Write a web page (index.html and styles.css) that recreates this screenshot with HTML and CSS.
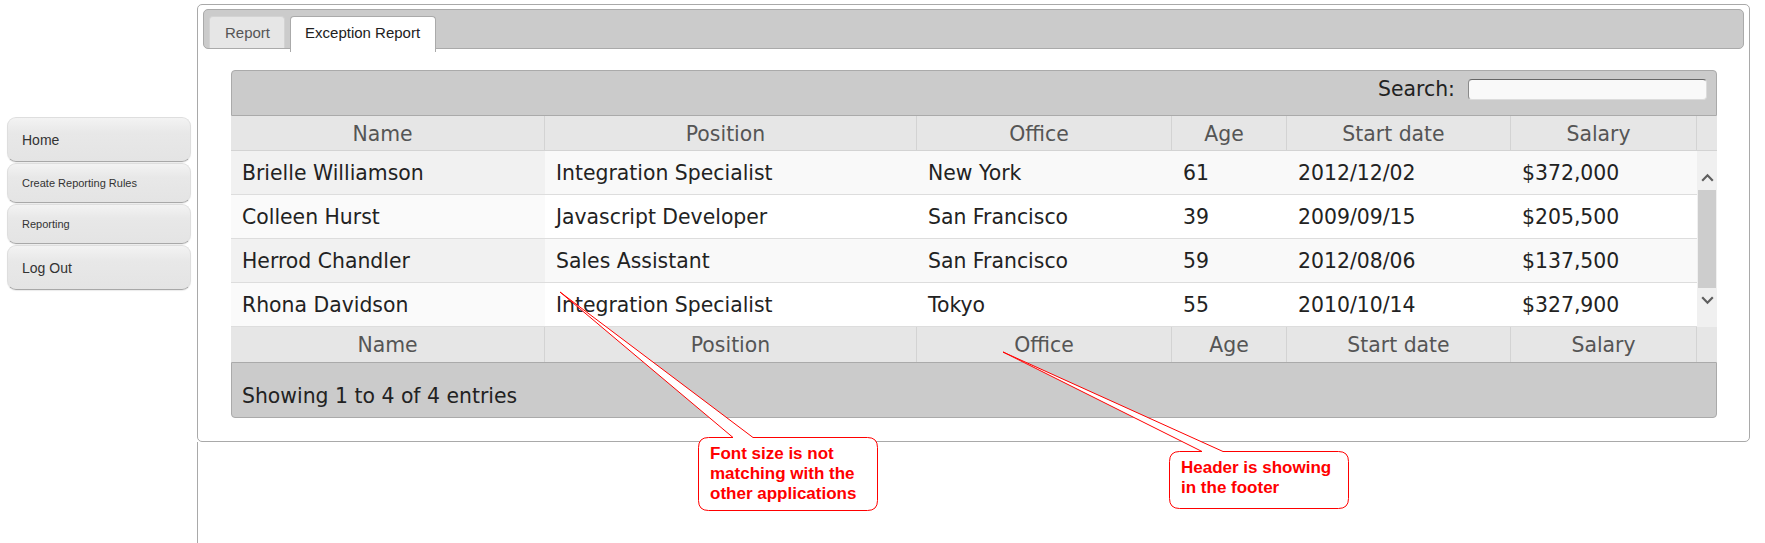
FILE: index.html
```html
<!DOCTYPE html>
<html lang="en">
<head>
<meta charset="utf-8">
<title>Exception Report</title>
<link rel="stylesheet" href="styles.css">
</head>
<body>
<div class="page">
  <nav class="sidebar">
    <a class="nav-btn big">Home</a>
    <a class="nav-btn">Create Reporting Rules</a>
    <a class="nav-btn">Reporting</a>
    <a class="nav-btn big">Log Out</a>
  </nav>
  <main class="main">
    <section class="panel">
      <div class="tabbar">
        <div class="tab">Report</div>
        <div class="tab active">Exception Report</div>
      </div>
      <div class="tab-content">
        <div class="dt">
          <div class="dt-toolbar">
            <label class="search-label">Search:</label>
            <div class="search-input"></div>
          </div>
          <div class="dt-head cols7">
            <div class="th">Name</div>
            <div class="th">Position</div>
            <div class="th">Office</div>
            <div class="th">Age</div>
            <div class="th">Start date</div>
            <div class="th">Salary</div>
            <div class="th spacer"></div>
          </div>
          <div class="dt-body">
            <div class="dt-rows">
              <div class="tr odd">
                <div class="td sorted">Brielle Williamson</div>
                <div class="td">Integration Specialist</div>
                <div class="td">New York</div>
                <div class="td">61</div>
                <div class="td">2012/12/02</div>
                <div class="td">$372,000</div>
              </div>
              <div class="tr even">
                <div class="td sorted">Colleen Hurst</div>
                <div class="td">Javascript Developer</div>
                <div class="td">San Francisco</div>
                <div class="td">39</div>
                <div class="td">2009/09/15</div>
                <div class="td">$205,500</div>
              </div>
              <div class="tr odd">
                <div class="td sorted">Herrod Chandler</div>
                <div class="td">Sales Assistant</div>
                <div class="td">San Francisco</div>
                <div class="td">59</div>
                <div class="td">2012/08/06</div>
                <div class="td">$137,500</div>
              </div>
              <div class="tr even">
                <div class="td sorted">Rhona Davidson</div>
                <div class="td">Integration Specialist</div>
                <div class="td">Tokyo</div>
                <div class="td">55</div>
                <div class="td">2010/10/14</div>
                <div class="td">$327,900</div>
              </div>
            </div>
            <div class="scrollbar">
              <div class="sb-btn up">
                <svg width="13" height="9" viewBox="0 0 13 9"><polyline points="1.2,7.8 6.5,2.3 11.8,7.8" fill="none" stroke="#5f5f5f" stroke-width="2.2"/></svg>
              </div>
              <div class="sb-thumb"></div>
              <div class="sb-btn down">
                <svg width="13" height="9" viewBox="0 0 13 9"><polyline points="1.2,1.2 6.5,6.7 11.8,1.2" fill="none" stroke="#5f5f5f" stroke-width="2.2"/></svg>
              </div>
            </div>
          </div>
          <div class="dt-foot cols7">
            <div class="th">Name</div>
            <div class="th">Position</div>
            <div class="th">Office</div>
            <div class="th">Age</div>
            <div class="th">Start date</div>
            <div class="th">Salary</div>
            <div class="th spacer"></div>
          </div>
          <div class="dt-info">Showing 1 to 4 of 4 entries</div>
        </div>
      </div>
    </section>
    <div class="rail"></div>
  </main>
</div>

<div class="annotations">
  <svg class="callout-shapes" width="1765" height="543" viewBox="0 0 1765 543">
    <path d="M708.5 437.5 H733 L560 292 L753 437.5 H867.5 Q877.5 437.5 877.5 447.5 V500.5 Q877.5 510.5 867.5 510.5 H708.5 Q698.5 510.5 698.5 500.5 V447.5 Q698.5 437.5 708.5 437.5 Z" fill="#fff" stroke="#ff0000" stroke-width="1"/>
    <path d="M1179.5 451.5 H1202 L1003 352 L1223 451.5 H1338.5 Q1348.5 451.5 1348.5 461.5 V498.5 Q1348.5 508.5 1338.5 508.5 H1179.5 Q1169.5 508.5 1169.5 498.5 V461.5 Q1169.5 451.5 1179.5 451.5 Z" fill="#fff" stroke="#ff0000" stroke-width="1"/>
  </svg>
  <div class="callout-text c1">Font size is not<br>matching with the<br>other applications</div>
  <div class="callout-text c2">Header is showing<br>in the footer</div>
</div>
</body>
</html>
```

FILE: styles.css
```css
* { box-sizing: border-box; }

html, body {
  margin: 0;
  padding: 0;
  background: #fff;
}

body {
  position: relative;
  width: 1765px;
  height: 543px;
  overflow: hidden;
  font-family: "Liberation Sans", Arial, sans-serif;
}

.page {
  display: flex;
  height: 543px;
}

/* ---------- sidebar ---------- */
.sidebar {
  width: 197px;
  flex: none;
  padding: 117px 0 0 7px;
  display: flex;
  flex-direction: column;
  gap: 1px;
}

.nav-btn {
  display: flex;
  align-items: center;
  width: 184px;
  height: 40px;
  padding-left: 14px;
  border: 1px solid #dedede;
  border-bottom-color: #a8a8a8;
  border-radius: 9px;
  background: linear-gradient(to bottom, #f3f3f3 0%, #e8e8e8 35%, #e4e4e4 100%);
  box-shadow: 0 1px 1px rgba(0, 0, 0, 0.08);
  color: #333;
  font-size: 11px;
  text-decoration: none;
}

.nav-btn.big {
  height: 45px;
  font-size: 14px;
}

/* ---------- main panel ---------- */
.main {
  flex: 1;
  display: flex;
  flex-direction: column;
  padding-top: 4px;
}

.panel {
  margin-right: 15px;
  border: 1px solid #a9a9a9;
  border-radius: 5px;
  padding: 4px 5px 0;
  background: #fff;
}

.rail {
  flex: 1;
  border-left: 1px solid #a9a9a9;
}

.tabbar {
  height: 40px;
  border: 1px solid #aaa;
  border-radius: 5px;
  background: #cbcbcb;
  padding: 5px 4px 0 5px;
  display: flex;
  align-items: flex-end;
  gap: 5px;
}

.tab {
  height: 32px;
  padding: 0 14px 0 15px;
  border: 1px solid #d3d3d3;
  border-bottom: 0;
  border-radius: 4px 4px 0 0;
  background: #e6e6e6;
  color: #555;
  font-size: 15px;
  line-height: 31px;
}

.tab.active {
  height: 36px;
  margin-bottom: -4px;
  padding: 0 15px 0 14px;
  background: #fff;
  border-color: #aaa;
  color: #212121;
}

.tab-content {
  padding: 21px 27px 23px 28px;
}

/* ---------- data table ---------- */
.dt {
  width: 1486px;
  font-family: "DejaVu Sans", Verdana, sans-serif;
  font-size: 20.4px;
  color: #222;
}

.dt-toolbar {
  height: 46px;
  border: 1px solid #aaa;
  border-radius: 4px 4px 0 0;
  background: #cbcbcb;
  padding: 8px 9px 0 0;
  display: flex;
  justify-content: flex-end;
  align-items: flex-start;
}

.search-label {
  line-height: 21px;
  margin-right: 13px;
  color: #222;
}

.search-input {
  width: 239px;
  height: 21px;
  border: 1px solid #dcdcdc;
  border-top-color: #666;
  border-left-color: #8a8a8a;
  border-radius: 4px;
  background: #f9f9f9;
}

.cols7 {
  display: grid;
  grid-template-columns: 314px 372px 255px 115px 224px 186px 20px;
  background: #e6e6e6;
  color: #555;
}

.dt-head {
  height: 35px;
  border-bottom: 1px solid #d3d3d3;
}

.dt-foot {
  height: 35px;
}

.th {
  border-right: 1px solid #d3d3d3;
  text-align: center;
  line-height: 34px;
  padding-top: 1px;
  white-space: nowrap;
}

.dt-head .th {
  padding-right: 10px;
}

.th.spacer {
  border-right: 0;
  padding: 0;
}

.dt-body {
  display: flex;
}

.dt-rows {
  width: 1466px;
}

.tr {
  display: grid;
  grid-template-columns: 314px 372px 255px 115px 224px 186px;
  height: 44px;
  border-bottom: 1px solid #ddd;
}

.tr.odd { background: #f9f9f9; }
.tr.even { background: #fff; }
.tr.odd .sorted { background: #f1f1f1; }
.tr.even .sorted { background: #fafafa; }

.td {
  padding: 1px 10px 0 11px;
  line-height: 42px;
  white-space: nowrap;
}

.scrollbar {
  width: 20px;
  height: 176px;
  background: #f0f0f0;
  display: flex;
  flex-direction: column;
}

.sb-btn {
  height: 39px;
  display: flex;
  justify-content: center;
  padding-left: 1px;
}

.sb-btn svg { display: block; }

.sb-btn.up {
  align-items: flex-end;
  padding-bottom: 8px;
}

.sb-btn.down {
  align-items: flex-start;
  padding-top: 8px;
}

.sb-thumb {
  height: 98px;
  width: 18px;
  margin-left: 1px;
  background: #cdcdcd;
}

.dt-info {
  height: 56px;
  border: 1px solid #aaa;
  border-radius: 0 0 4px 4px;
  background: #cbcbcb;
  padding: 22px 10px 0 10px;
  line-height: 23px;
  color: #222;
}

/* ---------- annotations ---------- */
.annotations {
  position: absolute;
  left: 0;
  top: 0;
  width: 1765px;
  height: 543px;
  pointer-events: none;
}

.callout-shapes {
  position: absolute;
  left: 0;
  top: 0;
}

.callout-text {
  position: absolute;
  color: #ff0000;
  font-family: "Liberation Sans", Arial, sans-serif;
  font-weight: bold;
  font-size: 17px;
  line-height: 20px;
  white-space: nowrap;
}

.callout-text.c1 { left: 710px; top: 444px; }
.callout-text.c2 { left: 1181px; top: 458px; }
```
